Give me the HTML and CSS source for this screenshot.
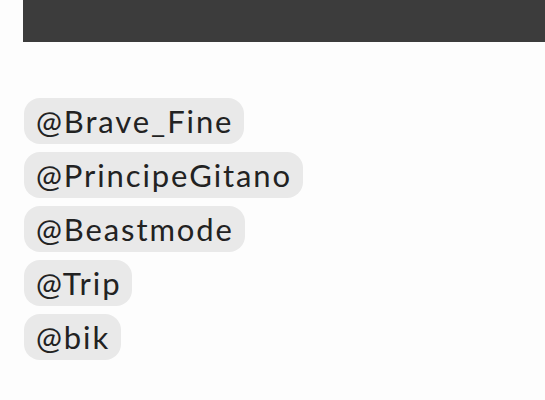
FILE: index.html
```html
<!DOCTYPE html>
<html>
<head>
<meta charset="utf-8">
<link rel="stylesheet" href="styles.css">
</head>
<body>
<div class="page">
  <div class="topbar"></div>
  <div class="mentions">
    <span class="chip">@Brave_Fine</span>
    <span class="chip">@PrincipeGitano</span>
    <span class="chip">@Beastmode</span>
    <span class="chip">@Trip</span>
    <span class="chip">@bik</span>
  </div>
</div>
</body>
</html>
```
FILE: styles.css
```css
html, body {
  margin: 0;
  padding: 0;
  background: #fdfdfd;
}
.page {
  width: 545px;
  height: 400px;
  overflow: hidden;
}
.topbar {
  margin-left: 23px;
  height: 42px;
  background: #3c3c3c;
}
.mentions {
  display: flex;
  flex-direction: column;
  align-items: flex-start;
  gap: 8px;
  padding: 56px 0 0 24px;
}
.chip {
  display: flex;
  align-items: center;
  height: 46px;
  padding: 0 11px 0 12px;
  border-radius: 16px;
  background: #e9e9e9;
  color: #222;
  font-family: Lato, "Noto Sans", sans-serif;
  font-size: 31px;
  letter-spacing: 1.9px;
  white-space: nowrap;
}
```
